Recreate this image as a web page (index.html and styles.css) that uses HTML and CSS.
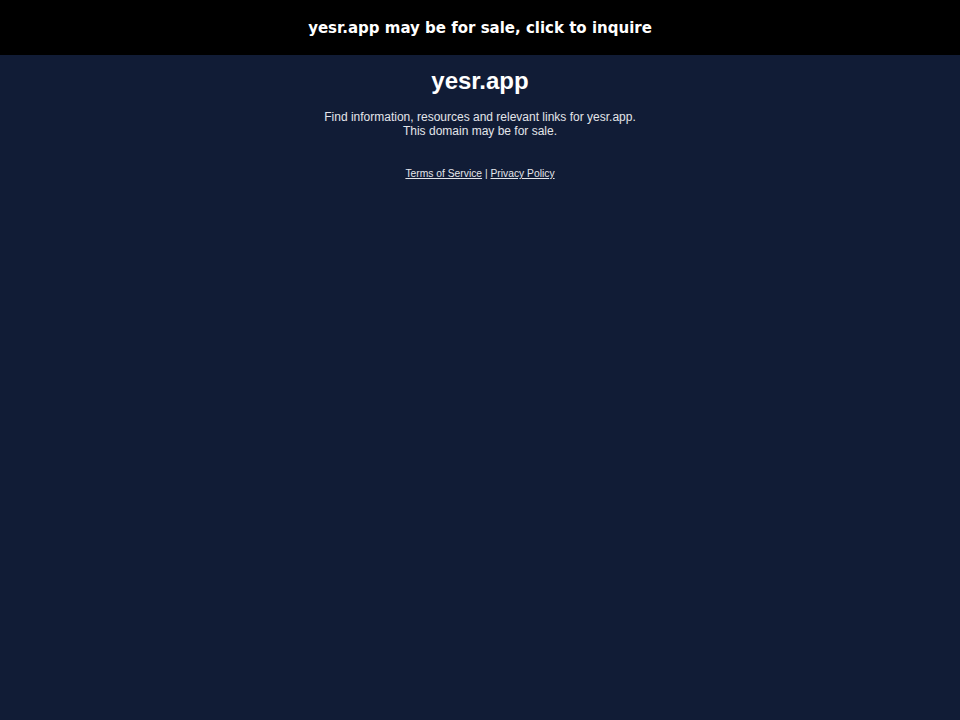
FILE: index.html
```html
<!DOCTYPE html>
<html>
<head>
<meta charset="utf-8">
<link rel="stylesheet" href="styles.css">
</head>
<body>
<div class="bar"><a class="bar-link" href="#">yesr.app may be for sale, click to inquire</a></div>
<main class="content">
  <h1 class="title">yesr.app</h1>
  <p class="desc">Find information, resources and relevant links for yesr.app.<br>This domain may be for sale.</p>
  <p class="legal"><a href="#">Terms of Service</a> | <a href="#">Privacy Policy</a></p>
</main>
</body>
</html>
```
FILE: styles.css
```css
html, body {
  margin: 0;
  padding: 0;
  height: 100%;
}
body {
  background: #111c36;
  font-family: "Liberation Sans", Arial, sans-serif;
  color: #e6e8ee;
}
.bar {
  background: #000;
  height: 55px;
  display: flex;
  align-items: center;
  justify-content: center;
}
.bar-link {
  font-family: "DejaVu Sans", sans-serif;
  font-weight: bold;
  font-size: 15px;
  color: #fff;
  text-decoration: none;
}
.content {
  text-align: center;
  padding-top: 12px;
}
.title {
  margin: 0;
  font-size: 24px;
  font-weight: bold;
  color: #fff;
  line-height: 28px;
}
.desc {
  margin: 15px 0 0;
  font-size: 12px;
  line-height: 14px;
  color: #e3e5ea;
}
.legal {
  margin: 30px 0 0;
  font-size: 10.3px;
  line-height: 12px;
  color: #e3e5ea;
}
.legal a {
  color: #e3e5ea;
  text-decoration: underline;
}
```
